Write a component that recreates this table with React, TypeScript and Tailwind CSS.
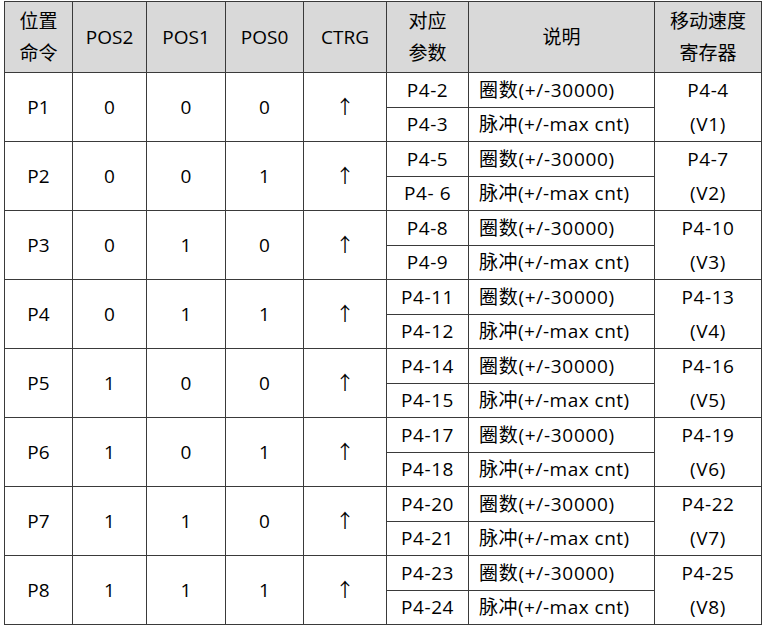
const ROWS = [
  { p: 'P1', pos: ['0', '0', '0'], a: 'P4-2', b: 'P4-3', reg: 'P4-4', v: '(V1)' },
  { p: 'P2', pos: ['0', '0', '1'], a: 'P4-5', b: 'P4- 6', reg: 'P4-7', v: '(V2)' },
  { p: 'P3', pos: ['0', '1', '0'], a: 'P4-8', b: 'P4-9', reg: 'P4-10', v: '(V3)' },
  { p: 'P4', pos: ['0', '1', '1'], a: 'P4-11', b: 'P4-12', reg: 'P4-13', v: '(V4)' },
  { p: 'P5', pos: ['1', '0', '0'], a: 'P4-14', b: 'P4-15', reg: 'P4-16', v: '(V5)' },
  { p: 'P6', pos: ['1', '0', '1'], a: 'P4-17', b: 'P4-18', reg: 'P4-19', v: '(V6)' },
  { p: 'P7', pos: ['1', '1', '0'], a: 'P4-20', b: 'P4-21', reg: 'P4-22', v: '(V7)' },
  { p: 'P8', pos: ['1', '1', '1'], a: 'P4-23', b: 'P4-24', reg: 'P4-25', v: '(V8)' },
]

const cell = 'border border-[#3a3a3a] text-center align-middle p-0'
const head = 'border border-[#3a3a3a] bg-[#d9d9d9] text-center align-middle p-0 font-normal leading-[32px]'

export default function App() {
  return (
    <div className="bg-white w-[773px] h-[628px] pl-[4px] pt-[1px] text-[19px] text-black [font-family:'Open_Sans','Noto_Sans_CJK_SC',sans-serif]">
      <table className="border-collapse table-fixed w-[757px]">
        <colgroup>
          <col className="w-[68px]" />
          <col className="w-[74px]" />
          <col className="w-[79px]" />
          <col className="w-[78px]" />
          <col className="w-[83px]" />
          <col className="w-[82px]" />
          <col className="w-[186px]" />
          <col className="w-[107px]" />
        </colgroup>
        <thead>
          <tr className="h-[71px]">
            <th className={head}>位置<br />命令</th>
            <th className={head}>POS2</th>
            <th className={head}>POS1</th>
            <th className={head}>POS0</th>
            <th className={head}>CTRG</th>
            <th className={head}>对应<br />参数</th>
            <th className={head}>说明</th>
            <th className={head}>移动速度<br />寄存器</th>
          </tr>
        </thead>
        <tbody>
          {ROWS.map((r) => (
            <>
              <tr key={r.p + 'a'} className="h-[34.2px]">
                <td rowSpan={2} className={cell}>{r.p}</td>
                {r.pos.map((x, i) => (
                  <td key={i} rowSpan={2} className={cell}>{x}</td>
                ))}
                <td rowSpan={2} className={cell}>↑</td>
                <td className={cell + ' tracking-[0.6px]'}>{r.a}</td>
                <td className={cell + ' !text-left pl-[10px] tracking-[0.7px]'}>圈数(+/-30000)</td>
                <td rowSpan={2} className={cell + ' leading-[34px] tracking-[0.6px]'}>{r.reg}<br />{r.v}</td>
              </tr>
              <tr key={r.p + 'b'} className="h-[34.2px]">
                <td className={cell + ' tracking-[0.6px]'}>{r.b}</td>
                <td className={cell + ' !text-left pl-[10px] tracking-[0.5px]'}>脉冲(+/-max cnt)</td>
              </tr>
            </>
          ))}
        </tbody>
      </table>
    </div>
  )
}
